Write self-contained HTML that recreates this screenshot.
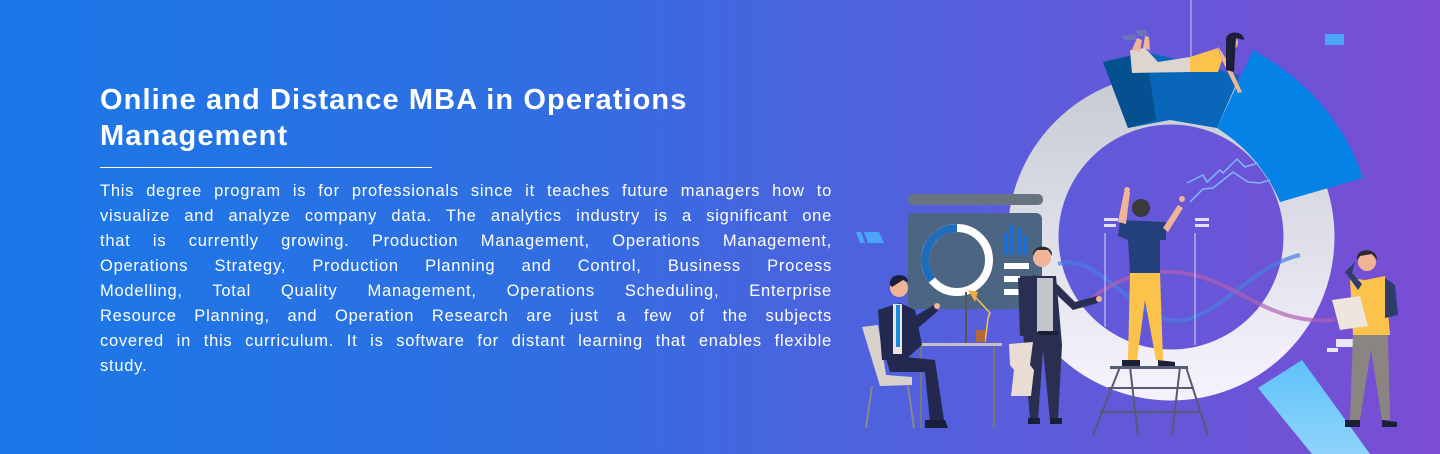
<!DOCTYPE html>
<html><head><meta charset="utf-8"><style>
body{margin:0;width:1440px;height:454px;overflow:hidden;position:relative;font-family:"Liberation Sans",sans-serif;}
.bg{position:absolute;left:0;top:0;width:1440px;height:454px;background:linear-gradient(90deg,#1a78e8 0%,#2e6fe2 35%,#5a5ddc 70%,#7a4dd3 100%);}
h1{position:absolute;left:100px;top:82px;margin:0;color:#fff;font-size:29px;font-weight:bold;line-height:36px;letter-spacing:1.1px;}
.rule{position:absolute;left:100px;top:167px;width:332px;height:1px;background:#fff;}
.p{position:absolute;left:100px;top:179px;width:732px;color:#fff;font-size:16.5px;line-height:25px;letter-spacing:0.75px;}
.p div{text-align:justify;text-align-last:justify;white-space:nowrap;}
.p div.l{text-align-last:left;}
svg{position:absolute;left:0;top:0;}
</style></head><body>
<div class="bg"></div>
<h1>Online and Distance MBA in Operations<br>Management</h1>
<div class="rule"></div>
<div class="p">
<div>This degree program is for professionals since it teaches future managers how to</div>
<div>visualize and analyze company data. The analytics industry is a significant one</div>
<div>that is currently growing. Production Management, Operations Management,</div>
<div>Operations Strategy, Production Planning and Control, Business Process</div>
<div>Modelling, Total Quality Management, Operations Scheduling, Enterprise</div>
<div>Resource Planning, and Operation Research are just a few of the subjects</div>
<div>covered in this curriculum. It is software for distant learning that enables flexible</div>
<div class="l">study.</div>
</div>
<svg width="1440" height="454" viewBox="0 0 1440 454">
<defs><linearGradient id="rg" x1="0" y1="0" x2="0" y2="1"><stop offset="0" stop-color="#c9cdd6"/><stop offset="1" stop-color="#f4f1fb"/></linearGradient>
<linearGradient id="hg" x1="0" y1="0" x2="0" y2="1"><stop offset="0" stop-color="#5ec2fa"/><stop offset="1" stop-color="#8ed4fb"/></linearGradient></defs>
<!-- handle -->
<polygon points="1258,388 1302,360 1370,454 1312,454" fill="url(#hg)"/>
<!-- ring -->
<circle cx="1171" cy="237" r="138" fill="none" stroke="url(#rg)" stroke-width="51"/>
<!-- dark blue top segment -->
<polygon points="1103,62 1146,52 1240,75 1217,128 1170,120 1128,128" fill="#0a66b8"/>
<polygon points="1103,62 1146,52 1156,120 1128,128" fill="#05518f"/>
<!-- bright blue segment -->
<path d="M1253,50 Q1335,95 1363,178 L1280,202 Q1260,155 1217,128 Z" fill="#0582e6"/>
<!-- hanging line -->
<line x1="1191" y1="0" x2="1191" y2="62" stroke="#c8c8e8" stroke-width="1"/>
<!-- woman -->
<path d="M1130,50 L1145,48 L1158,62 L1190,57 L1190,72 L1132,73 Z" fill="#dcd6cf"/>
<path d="M1132,50 L1137,38 L1142,40 L1140,52Z M1143,48 L1145,36 L1149,37 L1150,50Z" fill="#f0b497"/>
<path d="M1122,36 L1136,34 L1136,40 L1124,40Z M1136,30 L1146,30 L1148,36 L1138,36Z" fill="#6a74b8"/>
<path d="M1190,57 L1218,48 L1222,60 L1218,72 L1190,72 Z" fill="#fbc24c"/>
<path d="M1218,46 L1222,60 L1238,93 L1242,92 L1228,62Z" fill="#f0b497"/>
<circle cx="1232" cy="43" r="6" fill="#f0b497"/>
<path d="M1226,40 C1226,30 1244,30 1244,40 L1236,38 L1234,72 L1226,70 Z" fill="#1c1f3a"/>
<!-- lines chart -->
<polyline points="1187,183 1203,175 1207,182 1220,170 1223,173 1237,159 1245,167 1258,163" fill="none" stroke="#7fb8f8" stroke-width="1.5"/>
<polyline points="1190,202 1203,189 1213,188 1233,172 1248,182 1260,183 1270,180" fill="none" stroke="#7fb8f8" stroke-width="1.5"/>
<!-- wave lines -->
<path d="M1058,264 C1100,250 1140,330 1185,320 C1225,310 1255,265 1300,255" fill="none" stroke="#4a7fe0" stroke-width="4" opacity=".7"/>
<path d="M1090,300 C1125,270 1170,265 1210,280 C1250,295 1280,325 1335,320" fill="none" stroke="#b05fb2" stroke-width="4" opacity=".7"/>
<line x1="1105" y1="233" x2="1105" y2="327" stroke="#d8d8ee"/>
<line x1="1195" y1="233" x2="1195" y2="345" stroke="#d8d8ee"/>
<rect x="1104" y="218" width="14" height="3" fill="#e0e0f0"/><rect x="1104" y="224" width="12" height="3" fill="#e0e0f0"/>
<rect x="1195" y="218" width="14" height="3" fill="#e0e0f0"/><rect x="1195" y="224" width="14" height="3" fill="#e0e0f0"/>
<!-- decorations -->
<rect x="1325" y="34" width="19" height="11" fill="#4aa6f4"/>
<polygon points="856,232 861,232 865,243 860,243" fill="#4aa6f4"/><polygon points="864,232 879,232 884,243 868,243" fill="#4aa6f4"/>
<rect x="1336" y="339" width="18" height="8" fill="#e8e8f8"/><rect x="1327" y="348" width="11" height="4" fill="#e8e8f8"/>
<!-- monitor -->
<rect x="908" y="194" width="135" height="11" rx="5" fill="#67737f"/>
<rect x="908" y="213" width="134" height="96" rx="6" fill="#4c6582"/>
<circle cx="957" cy="260" r="32" fill="none" stroke="#fff" stroke-width="8"/>
<path d="M957,228 A32,32 0 0 0 932,280" fill="none" stroke="#1f6cb8" stroke-width="8"/>
<rect x="1003" y="233" width="4" height="22" fill="#1a6fd4"/><rect x="1010" y="225" width="4" height="30" fill="#1a6fd4"/><rect x="1017" y="228" width="4" height="27" fill="#1a6fd4"/><rect x="1024" y="236" width="4" height="19" fill="#1a6fd4"/>
<rect x="1004" y="263" width="25" height="6" fill="#fff"/><rect x="1004" y="276" width="25" height="6" fill="#fff"/><rect x="1004" y="289" width="25" height="6" fill="#fff"/>
<!-- lamp + plant -->
<line x1="966" y1="292" x2="966" y2="343" stroke="#555" stroke-width="2"/>
<path d="M970,292 L980,302 L990,313 L988,318 L985,342" fill="none" stroke="#f7c14c" stroke-width="1.5"/>
<path d="M968,290 L978,292 L975,302Z" fill="#f7a93c"/>
<rect x="976" y="330" width="9" height="12" fill="#b06a3a"/>
<!-- desk -->
<rect x="912" y="343" width="90" height="3" fill="#c8c0bc"/>
<line x1="921" y1="346" x2="921" y2="428" stroke="#777" stroke-width="2"/>
<line x1="994" y1="346" x2="994" y2="428" stroke="#777" stroke-width="2"/>
<!-- chair -->
<path d="M862,327 L878,325 L886,375 L912,377 L912,385 L880,386 Z" fill="#d9d2cc"/>
<line x1="872" y1="386" x2="866" y2="428" stroke="#888" stroke-width="2"/><line x1="908" y1="386" x2="914" y2="428" stroke="#888" stroke-width="2"/>
<!-- seated man -->
<path d="M878,310 L900,303 L915,310 L922,345 L905,360 L882,360 Z" fill="#23294e"/>
<path d="M885,355 L935,360 L944,420 L930,422 L925,372 L890,372Z" fill="#23294e"/>
<path d="M925,420 L945,420 L948,428 L925,428Z" fill="#1a1f38"/>
<rect x="893" y="304" width="9" height="50" fill="#ece4df"/>
<rect x="896" y="305" width="4" height="42" fill="#1a8ae0"/>
<circle cx="899" cy="288" r="9" fill="#f0b497"/><path d="M890,285 C888,273 908,272 908,282 L903,280 L892,287Z" fill="#1c1f3a"/>
<path d="M912,318 L934,305 L938,311 L918,328Z" fill="#23294e"/>
<circle cx="937" cy="306" r="3" fill="#f0b497"/>
<!-- standing man -->
<path d="M1020,276 L1056,276 L1062,345 L1058,420 L1050,420 L1043,350 L1038,420 L1030,420 L1024,345 Z" fill="#2a2e50"/>
<path d="M1018,278 L1036,275 L1036,335 L1020,336Z" fill="#2a2e50"/>
<rect x="1037" y="278" width="16" height="54" fill="#c4c4cc"/>
<rect x="1038" y="331" width="20" height="4" fill="#1a1f38"/>
<circle cx="1042" cy="258" r="9" fill="#f0b497"/><path d="M1033,256 C1031,244 1053,243 1052,256 L1048,250 L1036,250Z" fill="#2b2b2b"/>
<path d="M1055,282 L1075,302 L1097,296 L1098,303 L1073,310 L1058,296Z" fill="#2a2e50"/>
<circle cx="1099" cy="299" r="3" fill="#f0b497"/>
<path d="M1009,344 L1033,342 L1030,365 L1034,370 L1031,396 L1011,396 L1014,370 L1010,365Z" fill="#e8dcd3"/>
<rect x="1028" y="418" width="12" height="6" fill="#1a1f38"/><rect x="1050" y="418" width="12" height="6" fill="#1a1f38"/>
<!-- ladder -->
<line x1="1120" y1="367" x2="1093" y2="435" stroke="#555a75" stroke-width="2"/>
<line x1="1186" y1="367" x2="1208" y2="435" stroke="#555a75" stroke-width="2"/>
<line x1="1130" y1="367" x2="1138" y2="435" stroke="#555a75" stroke-width="2"/>
<line x1="1180" y1="367" x2="1172" y2="435" stroke="#555a75" stroke-width="2"/>
<rect x="1110" y="366" width="78" height="3" fill="#555a75"/>
<line x1="1108" y1="388" x2="1194" y2="388" stroke="#555a75" stroke-width="2"/>
<line x1="1100" y1="412" x2="1202" y2="412" stroke="#555a75" stroke-width="2"/>
<!-- man on ladder -->
<path d="M1120,220 L1166,222 L1166,240 L1160,240 L1160,273 L1130,273 L1128,240 L1118,236Z" fill="#24407c"/>
<path d="M1130,273 L1160,273 L1163,360 L1156,360 L1145,300 L1137,360 L1128,360 Z" fill="#fbc24c"/>
<path d="M1122,360 L1140,360 L1140,366 L1122,366Z M1158,360 L1175,362 L1175,366 L1158,366Z" fill="#1c1f3a"/>
<path d="M1118,222 L1124,192 L1130,192 L1126,224Z" fill="#f0b497"/>
<path d="M1163,228 L1178,205 L1183,208 L1168,232Z" fill="#f0b497"/>
<circle cx="1127" cy="190" r="3" fill="#f0b497"/><circle cx="1182" cy="199" r="3" fill="#f0b497"/>
<circle cx="1141" cy="208" r="9" fill="#3a3a3a"/>
<!-- right man -->
<path d="M1350,278 L1365,280 L1385,276 L1390,335 L1353,335Z" fill="#fbc24c"/>
<path d="M1385,278 L1395,285 L1398,315 L1385,318Z" fill="#2d3e6a"/>
<path d="M1353,335 L1388,335 L1390,420 L1382,420 L1371,350 L1360,420 L1350,420Z" fill="#8a8580"/>
<path d="M1345,420 L1360,420 L1360,427 L1345,427Z M1382,420 L1397,422 L1397,427 L1382,427Z" fill="#1c1f3a"/>
<path d="M1355,262 L1345,272 L1358,290 L1362,284 L1352,273Z" fill="#2d3e6a"/>
<circle cx="1367" cy="262" r="9" fill="#f0b497"/><path d="M1357,260 C1355,247 1378,247 1377,260 L1372,254 L1360,256Z" fill="#2b2b2b"/>
<path d="M1332,300 L1360,296 L1368,326 L1340,330Z" fill="#eee6dd"/>
</svg>
</body></html>
